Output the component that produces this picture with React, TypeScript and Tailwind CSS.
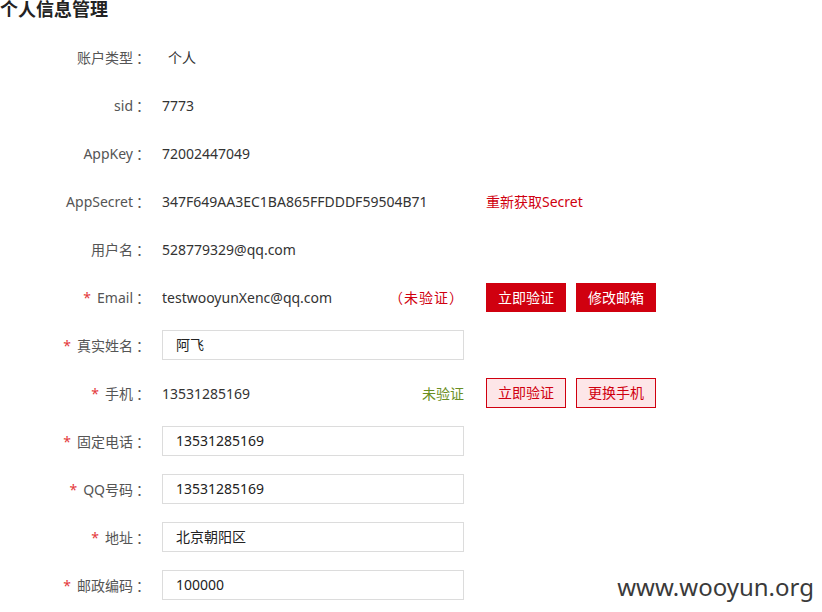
import React from "react";

type Row = {
  label: string;
  required?: boolean;
  value: string;
  input?: boolean;
  note?: React.ReactNode;
  extra?: React.ReactNode;
  indent?: boolean;
};

const RedButton = ({ children }: { children: React.ReactNode }) => (
  <button className="w-[80px] h-[29px] bg-[#d0000f] text-white text-[14px] leading-[29px]">
    {children}
  </button>
);

const LightButton = ({ children }: { children: React.ReactNode }) => (
  <button className="w-[80px] h-[30px] bg-[#fde6e8] border border-[#d0000f] text-[#d0000f] text-[14px] leading-[28px]">
    {children}
  </button>
);

const rows: Row[] = [
  { label: "账户类型", value: "个人", indent: true },
  { label: "sid", value: "7773" },
  { label: "AppKey", value: "72002447049" },
  {
    label: "AppSecret",
    value: "347F649AA3EC1BA865FFDDDF59504B71",
    extra: <span className="text-[#d0000f]">重新获取Secret</span>,
  },
  { label: "用户名", value: "528779329@qq.com" },
  {
    label: "Email",
    required: true,
    value: "testwooyunXenc@qq.com",
    note: <span className="text-[#d0000f] tracking-[1px]">（未验证）</span>,
    extra: (
      <div className="flex gap-[10px]">
        <RedButton>立即验证</RedButton>
        <RedButton>修改邮箱</RedButton>
      </div>
    ),
  },
  { label: "真实姓名", required: true, value: "阿飞", input: true },
  {
    label: "手机",
    required: true,
    value: "13531285169",
    note: <span className="text-[#6b8e23]">未验证</span>,
    extra: (
      <div className="flex gap-[10px]">
        <LightButton>立即验证</LightButton>
        <LightButton>更换手机</LightButton>
      </div>
    ),
  },
  { label: "固定电话", required: true, value: "13531285169", input: true },
  { label: "QQ号码", required: true, value: "13531285169", input: true },
  { label: "地址", required: true, value: "北京朝阳区", input: true },
  { label: "邮政编码", required: true, value: "100000", input: true },
];

export default function App() {
  return (
    <div
      className="relative w-[822px] h-[612px] overflow-hidden bg-white text-[14px] text-[#333]"
      style={{ fontFamily: '"Noto Sans", "Noto Sans CJK SC", sans-serif' }}
    >
      <h2 className="text-[18px] leading-[18px] font-bold text-[#222]">个人信息管理</h2>
      <div className="mt-[15px] flex flex-col">
        {rows.map((r) => (
          <div key={r.label} className="flex items-center h-[48px]">
            <div className="w-[150px] text-right text-[#555] whitespace-nowrap">
              {r.required && <span className="text-[#e4393c] mr-[6px]">*</span>}
              {r.label}
              <span className="ml-[3px]">：</span>
            </div>
            <div className="ml-[12px] w-[302px] flex items-center justify-between">
              {r.input ? (
                <div className="w-[302px] h-[30px] border border-[#dcdcdc] pl-[13px] leading-[28px] text-[#222]">
                  {r.value}
                </div>
              ) : (
                <span className={r.indent ? "pl-[6px] whitespace-nowrap" : "whitespace-nowrap"}>{r.value}</span>
              )}
              {r.note}
            </div>
            {r.extra && <div className="ml-[22px]">{r.extra}</div>}
          </div>
        ))}
      </div>
      <div className="absolute right-[8px] bottom-[12px] text-[24px] leading-[26px] text-[#3a3a3a]">
        www.wooyun.org
      </div>
    </div>
  );
}
